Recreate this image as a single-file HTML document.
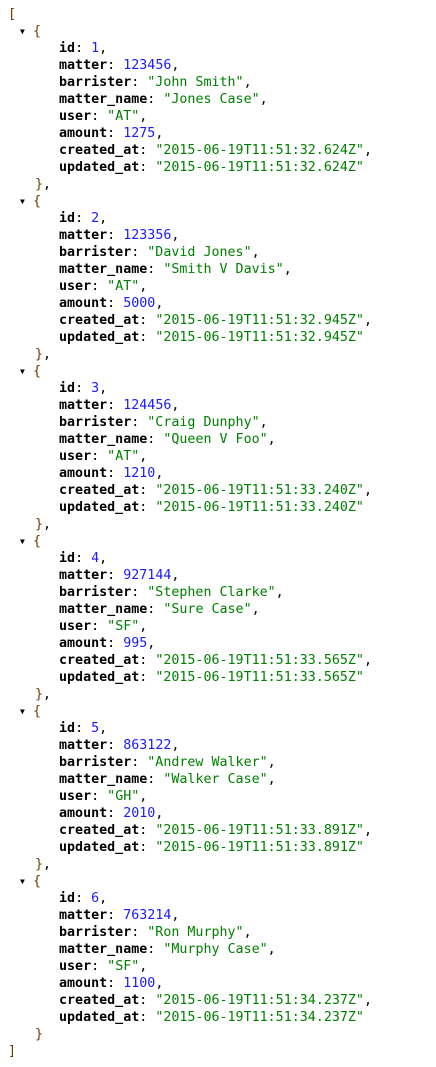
<!DOCTYPE html>
<html><head><meta charset="utf-8"><style>
body{margin:0;background:#fff;font-family:"DejaVu Sans Mono","Liberation Mono",monospace;font-size:13.33px;line-height:17px;color:#000}
.w{position:absolute;left:8px;top:6px;white-space:nowrap}
.b{color:#6e3a00}
.k{font-weight:bold}
.n{color:#1a1aff}
.s{color:#008000}
.o{padding-left:25px;position:relative}
.o .a{position:absolute;left:12px;top:0;font-size:8px}
.i{padding-left:51px;white-space:pre}
.c{padding-left:27px}
</style></head><body><div class="w" id="w"><div class="b">[</div><div class="o"><span class="a">▼</span><span class="b">{</span></div><div class="i"><span class="k">id</span>: <span class="n">1</span>,
<span class="k">matter</span>: <span class="n">123456</span>,
<span class="k">barrister</span>: <span class="s">"John Smith"</span>,
<span class="k">matter_name</span>: <span class="s">"Jones Case"</span>,
<span class="k">user</span>: <span class="s">"AT"</span>,
<span class="k">amount</span>: <span class="n">1275</span>,
<span class="k">created_at</span>: <span class="s">"2015-06-19T11:51:32.624Z"</span>,
<span class="k">updated_at</span>: <span class="s">"2015-06-19T11:51:32.624Z"</span></div><div class="c"><span class="b">}</span>,</div><div class="o"><span class="a">▼</span><span class="b">{</span></div><div class="i"><span class="k">id</span>: <span class="n">2</span>,
<span class="k">matter</span>: <span class="n">123356</span>,
<span class="k">barrister</span>: <span class="s">"David Jones"</span>,
<span class="k">matter_name</span>: <span class="s">"Smith V Davis"</span>,
<span class="k">user</span>: <span class="s">"AT"</span>,
<span class="k">amount</span>: <span class="n">5000</span>,
<span class="k">created_at</span>: <span class="s">"2015-06-19T11:51:32.945Z"</span>,
<span class="k">updated_at</span>: <span class="s">"2015-06-19T11:51:32.945Z"</span></div><div class="c"><span class="b">}</span>,</div><div class="o"><span class="a">▼</span><span class="b">{</span></div><div class="i"><span class="k">id</span>: <span class="n">3</span>,
<span class="k">matter</span>: <span class="n">124456</span>,
<span class="k">barrister</span>: <span class="s">"Craig Dunphy"</span>,
<span class="k">matter_name</span>: <span class="s">"Queen V Foo"</span>,
<span class="k">user</span>: <span class="s">"AT"</span>,
<span class="k">amount</span>: <span class="n">1210</span>,
<span class="k">created_at</span>: <span class="s">"2015-06-19T11:51:33.240Z"</span>,
<span class="k">updated_at</span>: <span class="s">"2015-06-19T11:51:33.240Z"</span></div><div class="c"><span class="b">}</span>,</div><div class="o"><span class="a">▼</span><span class="b">{</span></div><div class="i"><span class="k">id</span>: <span class="n">4</span>,
<span class="k">matter</span>: <span class="n">927144</span>,
<span class="k">barrister</span>: <span class="s">"Stephen Clarke"</span>,
<span class="k">matter_name</span>: <span class="s">"Sure Case"</span>,
<span class="k">user</span>: <span class="s">"SF"</span>,
<span class="k">amount</span>: <span class="n">995</span>,
<span class="k">created_at</span>: <span class="s">"2015-06-19T11:51:33.565Z"</span>,
<span class="k">updated_at</span>: <span class="s">"2015-06-19T11:51:33.565Z"</span></div><div class="c"><span class="b">}</span>,</div><div class="o"><span class="a">▼</span><span class="b">{</span></div><div class="i"><span class="k">id</span>: <span class="n">5</span>,
<span class="k">matter</span>: <span class="n">863122</span>,
<span class="k">barrister</span>: <span class="s">"Andrew Walker"</span>,
<span class="k">matter_name</span>: <span class="s">"Walker Case"</span>,
<span class="k">user</span>: <span class="s">"GH"</span>,
<span class="k">amount</span>: <span class="n">2010</span>,
<span class="k">created_at</span>: <span class="s">"2015-06-19T11:51:33.891Z"</span>,
<span class="k">updated_at</span>: <span class="s">"2015-06-19T11:51:33.891Z"</span></div><div class="c"><span class="b">}</span>,</div><div class="o"><span class="a">▼</span><span class="b">{</span></div><div class="i"><span class="k">id</span>: <span class="n">6</span>,
<span class="k">matter</span>: <span class="n">763214</span>,
<span class="k">barrister</span>: <span class="s">"Ron Murphy"</span>,
<span class="k">matter_name</span>: <span class="s">"Murphy Case"</span>,
<span class="k">user</span>: <span class="s">"SF"</span>,
<span class="k">amount</span>: <span class="n">1100</span>,
<span class="k">created_at</span>: <span class="s">"2015-06-19T11:51:34.237Z"</span>,
<span class="k">updated_at</span>: <span class="s">"2015-06-19T11:51:34.237Z"</span></div><div class="c"><span class="b">}</span></div><div class="b">]</div></div></body></html>
